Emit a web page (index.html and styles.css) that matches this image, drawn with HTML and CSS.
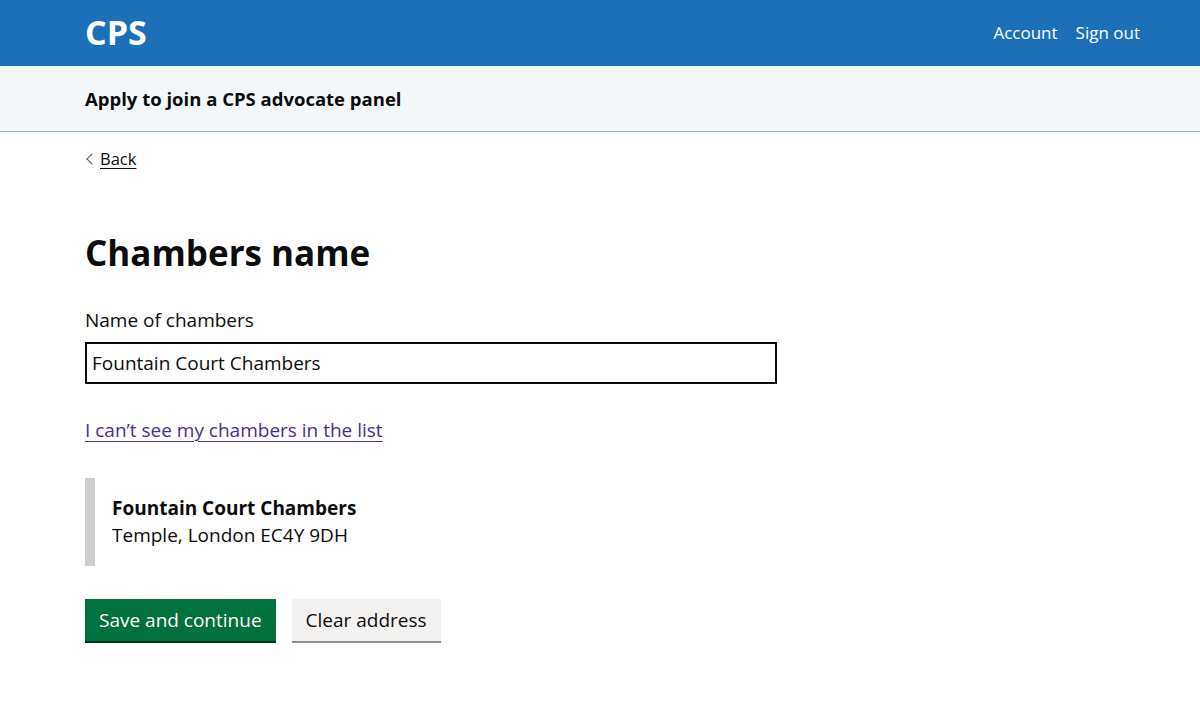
FILE: index.html
```html
<!DOCTYPE html>
<html lang="en">
<head>
  <meta charset="UTF-8">
  <title>Chambers name - Apply to join a CPS advocate panel</title>
  <link rel="stylesheet" href="styles.css">
</head>
<body>
  <header class="header">
    <div class="header-inner">
      <a class="header-logo" href="#">CPS</a>
      <nav class="header-nav">
        <a href="#">Account</a>
        <a href="#">Sign out</a>
      </nav>
    </div>
  </header>

  <div class="service-bar">
    <div class="container">
      <span class="service-name">Apply to join a CPS advocate panel</span>
    </div>
  </div>

  <div class="container">
    <a class="back-link" href="#">Back</a>

    <main class="main">
      <h1 class="heading-l">Chambers name</h1>

      <div class="form-group">
        <label class="label" for="chambers">Name of chambers</label>
        <input class="input" id="chambers" type="text" value="Fountain Court Chambers">
      </div>

      <p class="body"><a class="link link-visited" href="#">I can’t see my chambers in the list</a></p>

      <div class="inset-text">
        <p class="inset-title">Fountain Court Chambers</p>
        <p>Temple, London EC4Y 9DH</p>
      </div>

      <div class="button-group">
        <button class="button" type="submit">Save and continue</button>
        <button class="button button-secondary" type="button">Clear address</button>
      </div>
    </main>
  </div>
</body>
</html>
```

FILE: styles.css
```css
/* Estilos no padrão GOV.UK */
body {
  font-family: "Open Sans", "Liberation Sans", Arial, sans-serif;
  margin: 0;
  color: #0b0c0c;
  background-color: #fff;
}
p {
  margin: 0;
}
.container {
  padding: 0 85px;
}
.header {
  background-color: #1d70b8;
  height: 66px;
}
.header-inner {
  height: 100%;
  padding: 0 60px 0 85px;
  display: flex;
  align-items: center;
  justify-content: space-between;
}
.header-logo {
  color: #fff;
  font-weight: 700;
  font-size: 34px;
  line-height: 40px;
  text-decoration: none;
  margin-top: -2px;
}
.header-nav {
  display: flex;
  gap: 18px;
}
.header-nav a {
  color: #fff;
  font-size: 17px;
  line-height: 20px;
  text-decoration: none;
}
.service-bar {
  background-color: #f4f8fb;
  border-bottom: 1px solid #8eb8dc;
  height: 65px;
  display: flex;
  align-items: center;
}
.service-name {
  font-weight: 700;
  font-size: 18.5px;
  line-height: 25px;
}
.back-link {
  display: block;
  width: fit-content;
  position: relative;
  margin-top: 17px;
  padding-left: 15px;
  font-size: 16.5px;
  line-height: 20px;
  color: #0b0c0c;
  text-decoration-thickness: 1px;
  text-underline-offset: 3px;
}
.back-link::before {
  content: "";
  position: absolute;
  left: 3px;
  top: 6px;
  width: 7px;
  height: 7px;
  border-left: 1px solid #505a5f;
  border-bottom: 1px solid #505a5f;
  transform: rotate(45deg);
}
.main {
  padding-top: 64px;
}
.heading-l {
  font-size: 35px;
  line-height: 40px;
  font-weight: 700;
  margin: 0 0 35px;
}
.label {
  display: block;
  font-size: 19px;
  line-height: 25px;
  margin-bottom: 9px;
}
.input {
  box-sizing: border-box;
  width: 692px;
  height: 42px;
  padding: 5px;
  border: 2px solid #0b0c0c;
  border-radius: 0;
  font-family: inherit;
  font-size: 19px;
  color: #0b0c0c;
}
.body {
  font-size: 19px;
  line-height: 25px;
  margin-top: 34px;
}
.link {
  color: #1d70b8;
  text-decoration-thickness: 1px;
  text-underline-offset: 4px;
}
.link-visited {
  color: #4c2c92;
}
.inset-text {
  margin-top: 35px;
  padding: 17px 15px 17px 17px;
  border-left: 10px solid #cecece;
  font-size: 19px;
  line-height: 27px;
}
.inset-title {
  font-weight: 700;
}
.button-group {
  display: flex;
  align-items: flex-start;
  gap: 16px;
  margin-top: 33px;
}
.button {
  box-sizing: border-box;
  height: 44px;
  padding: 0 14px;
  border: none;
  border-bottom: 2px solid #002d18;
  border-radius: 0;
  background-color: #00703c;
  color: #fff;
  font-family: inherit;
  font-size: 19px;
  line-height: 25px;
  cursor: pointer;
}
.button-secondary {
  background-color: #f3f2f1;
  border-bottom-color: #929191;
  color: #0b0c0c;
}
```
